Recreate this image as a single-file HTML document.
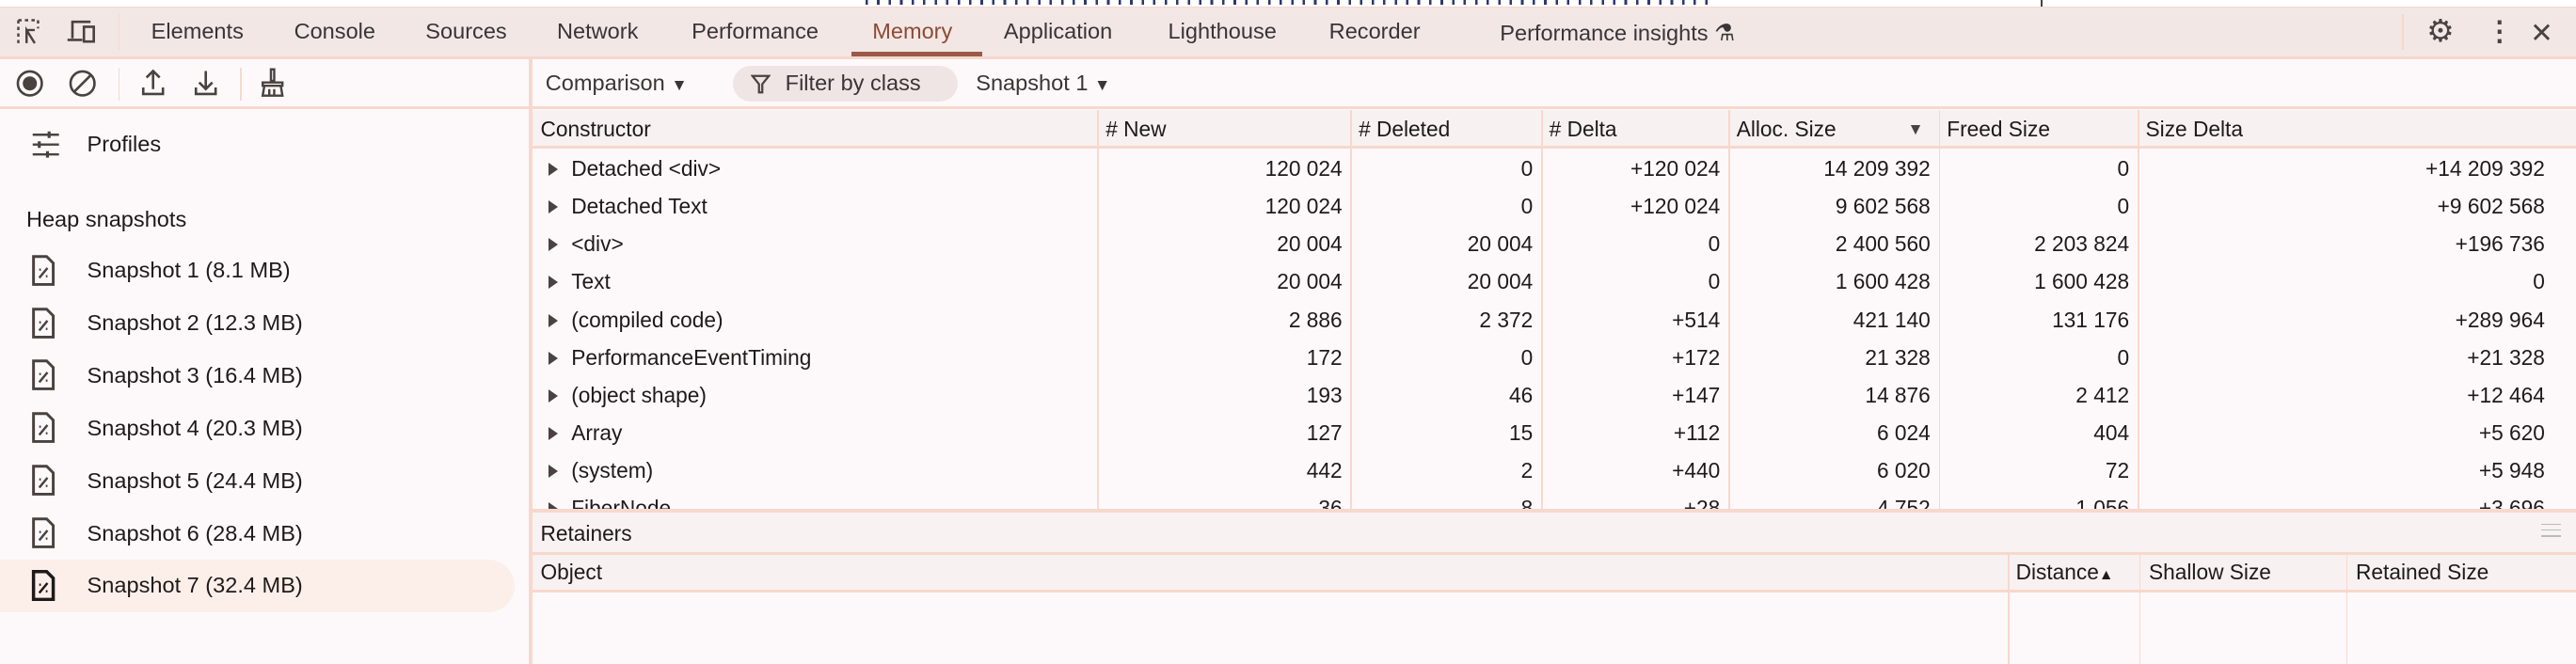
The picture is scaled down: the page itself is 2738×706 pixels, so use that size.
<!DOCTYPE html>
<html><head><meta charset="utf-8"><style>
html,body{margin:0;padding:0;width:2738px;height:706px;overflow:hidden;background:#fdf9fb}
#w{zoom:1.7462;width:1568px;height:405px;position:relative;font-family:"Liberation Sans",sans-serif;font-size:13px;color:#1f1a1a}
.a{position:absolute}
.tabs{left:0;top:4px;width:1568px;height:30px;background:#f2e7e5;border-top:1px solid #f7d8cc;border-bottom:2px solid #f7d8cc}
.tab{position:absolute;top:7px;font-size:13.5px;color:#3a3434}
.tb{left:0;top:36px;width:1568px;height:29px;border-bottom:2px solid #f7d8cc;background:#fdf9fb}
.vl{position:absolute;width:1px;background:#f7d8cc}
.side{left:0;top:67px;width:322px;height:338px}
.snap{position:absolute;left:0;width:313px;height:32px}
.snap span{position:absolute;left:53px;top:8px;font-size:13.5px}
.doc{position:absolute;left:19px;top:6px;width:15px;height:19px}
.grid{left:324px;top:67px;width:1244px;height:244px;overflow:hidden}
.hd{position:absolute;left:0;top:0;width:1244px;height:22px;background:#f8f1f1;border-bottom:2px solid #f7d8cc}
.c{position:absolute;white-space:nowrap}
.row{position:absolute;left:0;width:1244px;height:23px}
.num{text-align:right}
.tri{display:inline-block;width:0;height:0;border-left:6px solid #4a4240;border-top:4.5px solid transparent;border-bottom:4.5px solid transparent;margin:0 8px 0 10px;vertical-align:0px}
</style></head><body><div id="w">
<div class="a" style="left:0;top:0;width:1568px;height:4px;background:#fff;overflow:hidden"><div class="a" style="left:527px;top:0;width:515px;height:3px;background:repeating-linear-gradient(90deg,#2a3a6a 0 1.5px,transparent 1.5px 7px)"></div></div>
<div class="a" style="left:1242px;top:0;width:1px;height:4px;background:#444"></div>
<div class="a tabs">
 <svg class="a" style="left:9px;top:6px" width="18" height="18" viewBox="0 0 18 18" fill="none" stroke="#4a4240" stroke-width="1.4"><path d="M2 2h2M6 2h2M10 2h2M2 2v2M2 6v2M2 10v2M2 14v2M14 2v2M14 6v1M7 16L7 8L12 16"/><path d="M7 8h5M7 8v5"/></svg>
 <svg class="a" style="left:40px;top:6px" width="20" height="18" viewBox="0 0 20 18" fill="none" stroke="#4a4240" stroke-width="1.5"><path d="M4 13V3h11M1 14h9"/><rect x="11" y="6" width="6" height="9"/></svg>
 <div class="vl" style="left:72px;top:4px;height:22px"></div>
 <div class="tab" style="left:92px">Elements</div>
 <div class="tab" style="left:179px">Console</div>
 <div class="tab" style="left:259px">Sources</div>
 <div class="tab" style="left:339px">Network</div>
 <div class="tab" style="left:421px">Performance</div>
 <div class="tab" style="left:531px;color:#8e4a33">Memory</div>
 <div class="a" style="left:518px;top:27px;width:80px;height:3px;background:#9a5a48"></div>
 <div class="tab" style="left:611px">Application</div>
 <div class="tab" style="left:711px">Lighthouse</div>
 <div class="tab" style="left:809px">Recorder</div>
 <div class="tab" style="left:913px">Performance insights <span style="font-size:14px">⚗</span></div>
 <div class="vl" style="left:1462px;top:4px;height:22px"></div>
 <div class="a" style="left:1477px;top:3px;font-size:19px;color:#4a4240">⚙</div>
 <div class="a" style="left:1513px;top:4px;font-size:17px;font-weight:bold;color:#4a4240">⋮</div>
 <div class="a" style="left:1540px;top:5px;font-size:17px;color:#4a4240">✕</div>
</div>
<div class="a tb">
 <svg class="a" style="left:9px;top:6px" width="18" height="18" viewBox="0 0 18 18"><circle cx="9" cy="9" r="7.3" fill="none" stroke="#4a4240" stroke-width="1.5"/><circle cx="9" cy="9" r="4.3" fill="#4a4240"/></svg>
 <svg class="a" style="left:41px;top:6px" width="18" height="18" viewBox="0 0 18 18" fill="none" stroke="#4a4240" stroke-width="1.5"><circle cx="9" cy="9" r="7.3"/><path d="M4 14L14 4"/></svg>
 <div class="vl" style="left:72px;top:5px;height:20px"></div>
 <svg class="a" style="left:84px;top:5px" width="18" height="18" viewBox="0 0 18 18" fill="none" stroke="#4a4240" stroke-width="1.5"><path d="M9 13V2M5 6l4-4 4 4M3 12v4h12v-4"/></svg>
 <svg class="a" style="left:116px;top:5px" width="18" height="18" viewBox="0 0 18 18" fill="none" stroke="#4a4240" stroke-width="1.5"><path d="M9 2v11M5 9l4 4 4-4M3 12v4h12v-4"/></svg>
 <div class="vl" style="left:146px;top:5px;height:20px"></div>
 <svg class="a" style="left:157px;top:5px" width="18" height="18" viewBox="0 0 18 18" fill="none" stroke="#4a4240" stroke-width="1.4"><path d="M8 1h2v7H8zM3 9h12v2H3zM4 11l-1 6h12l-1-6M7 13v4M10 13v4"/></svg>
 <div class="vl" style="left:322px;top:0;height:30px"></div>
 <div class="a" style="left:332px;top:7px;font-size:13.5px;color:#3a3434">Comparison <span style="font-size:10px">▼</span></div>
 <div class="a" style="left:446px;top:4px;width:137px;height:22px;border-radius:11px;background:#efe5e4"></div>
 <svg class="a" style="left:457px;top:9px" width="12" height="12" viewBox="0 0 12 12" fill="none" stroke="#4a4240" stroke-width="1.3"><path d="M1 1h10L7 6v5H5V6z"/></svg>
 <div class="a" style="left:478px;top:7px;font-size:13.5px;color:#3a3434">Filter by class</div>
 <div class="a" style="left:594px;top:7px;font-size:13.5px;color:#3a3434">Snapshot 1 <span style="font-size:10px">▼</span></div>
</div>
<div class="a side">
 <svg class="a" style="left:19px;top:12px" width="18" height="18" viewBox="0 0 18 18" fill="none" stroke="#4a4240" stroke-width="1.4"><path d="M1 3h16M1 9h16M1 15h16"/><path d="M11 1v4M5 7v4M10 13v4" stroke-width="1.8"/></svg>
 <div class="a" style="left:53px;top:13px;font-size:13.5px">Profiles</div>
 <div class="a" style="left:16px;top:59px;font-size:13.5px">Heap snapshots</div>
 <div class="snap" style="top:82px"><svg class="doc" viewBox="0 0 15 19" fill="none" stroke="#4a4240" stroke-width="1.7"><path d="M1.5 1h8l4 4v13h-12z"/><path d="M5 14l5-6M5 9h1M9 13h1" stroke-width="1.4"/></svg><span>Snapshot 1 (8.1 MB)</span></div>
 <div class="snap" style="top:114px"><svg class="doc" viewBox="0 0 15 19" fill="none" stroke="#4a4240" stroke-width="1.7"><path d="M1.5 1h8l4 4v13h-12z"/><path d="M5 14l5-6M5 9h1M9 13h1" stroke-width="1.4"/></svg><span>Snapshot 2 (12.3 MB)</span></div>
 <div class="snap" style="top:146px"><svg class="doc" viewBox="0 0 15 19" fill="none" stroke="#4a4240" stroke-width="1.7"><path d="M1.5 1h8l4 4v13h-12z"/><path d="M5 14l5-6M5 9h1M9 13h1" stroke-width="1.4"/></svg><span>Snapshot 3 (16.4 MB)</span></div>
 <div class="snap" style="top:178px"><svg class="doc" viewBox="0 0 15 19" fill="none" stroke="#4a4240" stroke-width="1.7"><path d="M1.5 1h8l4 4v13h-12z"/><path d="M5 14l5-6M5 9h1M9 13h1" stroke-width="1.4"/></svg><span>Snapshot 4 (20.3 MB)</span></div>
 <div class="snap" style="top:210px"><svg class="doc" viewBox="0 0 15 19" fill="none" stroke="#4a4240" stroke-width="1.7"><path d="M1.5 1h8l4 4v13h-12z"/><path d="M5 14l5-6M5 9h1M9 13h1" stroke-width="1.4"/></svg><span>Snapshot 5 (24.4 MB)</span></div>
 <div class="snap" style="top:242px"><svg class="doc" viewBox="0 0 15 19" fill="none" stroke="#4a4240" stroke-width="1.7"><path d="M1.5 1h8l4 4v13h-12z"/><path d="M5 14l5-6M5 9h1M9 13h1" stroke-width="1.4"/></svg><span>Snapshot 6 (28.4 MB)</span></div>
 <div class="snap" style="top:274px;background:#fcefea;border-radius:0 16px 16px 0"><svg class="doc" viewBox="0 0 15 19" fill="none" stroke="#1f1a1a" stroke-width="2"><path d="M1.5 1h8l4 4v13h-12z"/><path d="M5 14l5-6M5 9h1M9 13h1" stroke-width="1.4"/></svg><span>Snapshot 7 (32.4 MB)</span></div>
</div>
<div class="vl" style="left:322px;top:36px;height:370px;width:2px"></div>
<div class="a grid">
 <div class="hd">
  <div class="c" style="left:5px;top:4px">Constructor</div>
  <div class="c" style="left:349px;top:4px"># New</div>
  <div class="c" style="left:503px;top:4px"># Deleted</div>
  <div class="c" style="left:619px;top:4px"># Delta</div>
  <div class="c" style="left:733px;top:4px">Alloc. Size</div>
  <div class="c" style="left:837px;top:6px;font-size:10px;color:#4a4240">▼</div>
  <div class="c" style="left:861px;top:4px">Freed Size</div>
  <div class="c" style="left:982px;top:4px">Size Delta</div>
 </div>
 <div class="vl" style="left:344px;top:0;height:244px"></div>
 <div class="vl" style="left:498px;top:0;height:244px"></div>
 <div class="vl" style="left:614px;top:0;height:244px"></div>
 <div class="vl" style="left:728px;top:0;height:244px"></div>
 <div class="vl" style="left:856px;top:0;height:244px"></div>
 <div class="vl" style="left:977px;top:0;height:244px"></div>
 <div id="rows"></div>
</div>
<div class="a" style="left:324px;top:310px;width:1244px;height:2px;background:#f7d8cc"></div>
<div class="a" style="left:324px;top:312px;width:1244px;height:24px;background:#f9f2f2;border-bottom:2px solid #f7d8cc">
 <div class="c" style="left:5px;top:5px">Retainers</div>
 <div class="c" style="left:1223px;top:7px;width:12px;height:3px;border-top:1px solid #bbb;border-bottom:1px solid #bbb"></div>
 <div class="c" style="left:1223px;top:14px;width:12px;height:1px;background:#bbb"></div>
</div>
<div class="a" style="left:324px;top:338px;width:1244px;height:21px;background:#f8f1f1;border-bottom:2px solid #f7d8cc">
 <div class="c" style="left:5px;top:3px">Object</div>
 <div class="c" style="left:903px;top:3px">Distance<span style="font-size:9px">▲</span></div>
 <div class="c" style="left:984px;top:3px">Shallow Size</div>
 <div class="c" style="left:1110px;top:3px">Retained Size</div>
</div>
<div class="vl" style="left:1222px;top:338px;height:67px"></div>
<div class="vl" style="left:1302px;top:338px;height:67px"></div>
<div class="vl" style="left:1428px;top:338px;height:67px"></div>
<script>
var d=[["Detached &lt;div&gt;","120 024","0","+120 024","14 209 392","0","+14 209 392"],
["Detached Text","120 024","0","+120 024","9 602 568","0","+9 602 568"],
["&lt;div&gt;","20 004","20 004","0","2 400 560","2 203 824","+196 736"],
["Text","20 004","20 004","0","1 600 428","1 600 428","0"],
["(compiled code)","2 886","2 372","+514","421 140","131 176","+289 964"],
["PerformanceEventTiming","172","0","+172","21 328","0","+21 328"],
["(object shape)","193","46","+147","14 876","2 412","+12 464"],
["Array","127","15","+112","6 024","404","+5 620"],
["(system)","442","2","+440","6 020","72","+5 948"],
["FiberNode","36","8","+28","4 752","1 056","+3 696"]];
var R=[344,498,614,728,856,977,1244],h="";
d.forEach(function(r,i){h+='<div class="row" style="top:'+(25+i*23)+'px"><div class="c" style="left:0;top:3px"><span class="tri"></span>'+r[0]+'</div>';
for(var j=1;j<7;j++)h+='<div class="c num" style="right:'+(1244-R[j-1]-(R[j]-R[j-1])+5+(j==6?14:0))+'px;top:3px">'+r[j]+'</div>';
h+='</div>';});
document.getElementById("rows").outerHTML=h;
</script>
</div></body></html>
